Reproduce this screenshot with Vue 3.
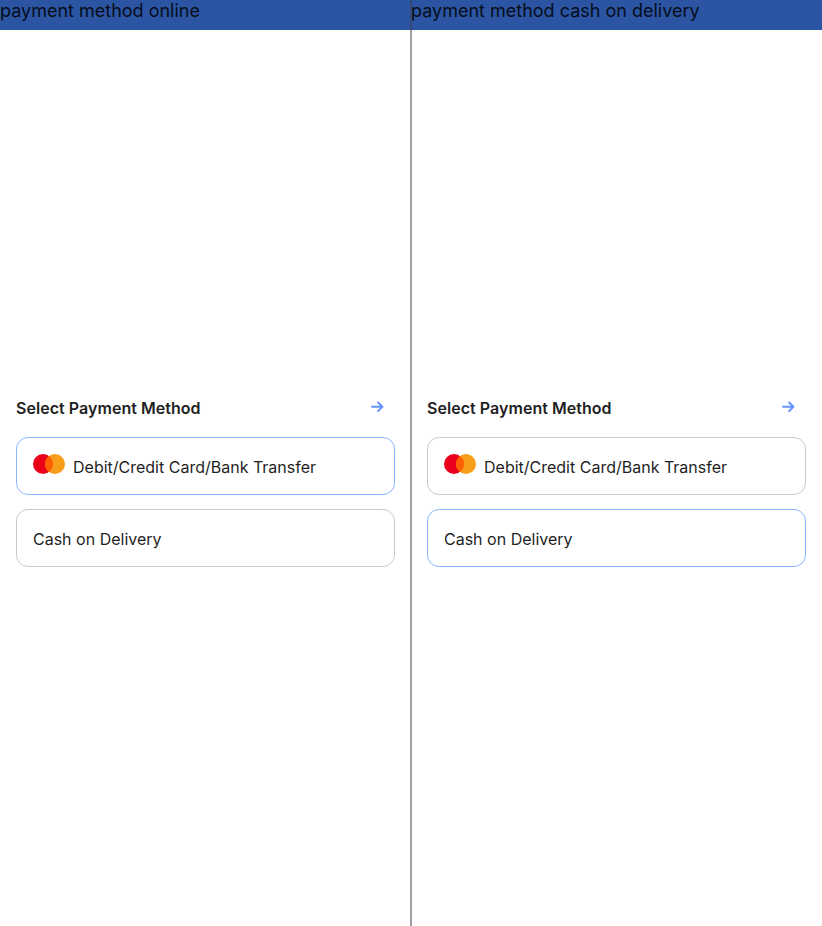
<script setup>
const panels = [
  { id: 'online', title: 'payment method online', selected: 'card' },
  { id: 'cash', title: 'payment method cash on delivery', selected: 'cash' }
]
const options = [
  { id: 'card', label: 'Debit/Credit Card/Bank Transfer' },
  { id: 'cash', label: 'Cash on Delivery' }
]
</script>

<template>
  <main class="page">
    <section v-for="panel in panels" :key="panel.id" class="panel">
      <header class="bar">{{ panel.title }}</header>
      <div class="content">
        <div class="heading">
          <h2>Select Payment Method</h2>
          <svg class="arrow" width="14" height="12" viewBox="0 0 14 12" fill="none">
            <path d="M2 5.8H12.2M8.1 1.5L12.4 5.8L8.1 10.1" stroke="#6594ff" stroke-width="2" stroke-linecap="round" stroke-linejoin="round" />
          </svg>
        </div>
        <div class="options">
          <div
            v-for="option in options"
            :key="option.id"
            class="option"
            :class="{ selected: option.id === panel.selected }"
          >
            <svg v-if="option.id === 'card'" class="logo" width="32" height="20" viewBox="0 0 32 20">
              <circle cx="10" cy="10" r="10" fill="#eb001b" />
              <circle cx="22" cy="10" r="10" fill="#f79e1b" />
              <path d="M16 2A10 10 0 0 1 16 18A10 10 0 0 1 16 2Z" fill="#ff5f00" />
            </svg>
            <span>{{ option.label }}</span>
          </div>
        </div>
      </div>
    </section>
    <div class="divider"></div>
  </main>
</template>

<style>
body {
  margin: 0;
  background: #fff;
}
</style>

<style scoped>
.page {
  position: relative;
  display: grid;
  grid-template-columns: 1fr 1fr;
  width: 822px;
  height: 926px;
  overflow: hidden;
  font-family: Inter, sans-serif;
  color: #1f1f1f;
}
.bar {
  box-sizing: border-box;
  height: 30px;
  background: #2b55a2;
  color: #060d1b;
  font-size: 18px;
  line-height: 22px;
  white-space: nowrap;
}
.content {
  padding: 366px 16px 0;
}
.heading {
  display: flex;
  justify-content: space-between;
  align-items: center;
  height: 24px;
  padding-right: 11px;
}
h2 {
  margin: 0;
  font-size: 16px;
  line-height: 24px;
  font-weight: 600;
  letter-spacing: 0.04px;
}
.arrow {
  margin-bottom: 2px;
}
.options {
  display: flex;
  flex-direction: column;
  gap: 14px;
  margin-top: 17px;
}
.option {
  box-sizing: border-box;
  display: flex;
  align-items: center;
  gap: 8px;
  height: 58px;
  padding: 2px 16px 0;
  border: 1px solid #cacaca;
  border-radius: 12px;
  font-size: 16px;
  line-height: 24px;
}
.option.selected {
  border-color: #8bb5ff;
}
.logo {
  margin-bottom: 6px;
}
.divider {
  position: absolute;
  top: 0;
  left: 410px;
  width: 2px;
  height: 926px;
  background: rgba(62, 62, 76, 0.5);
}
</style>
